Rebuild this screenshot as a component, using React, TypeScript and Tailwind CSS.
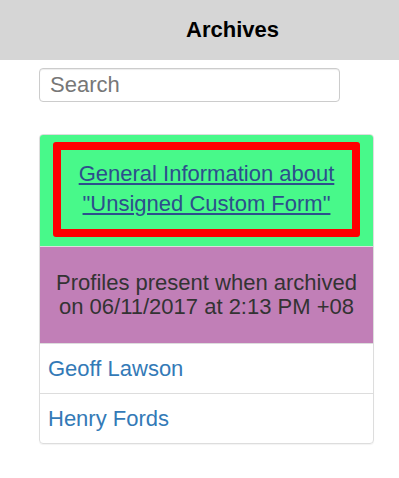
export default function App() {
  const profiles = ["Geoff Lawson", "Henry Fords"];

  return (
    <div className="min-h-screen bg-white font-['Liberation_Sans',Arial,sans-serif] text-[22px]">
      <header className="flex h-[60px] items-center justify-center bg-[#d6d6d6] pl-[66px]">
        <h1 className="text-[22px] font-bold leading-none text-black">Archives</h1>
      </header>

      <div className="pl-[39px] pt-[8px]">
        <input
          type="text"
          placeholder="Search"
          className="h-[34px] w-[301px] rounded-[4px] border border-[#ccc] px-[10px] text-[22px] text-[#555] shadow-[inset_0_1px_1px_rgba(0,0,0,0.075)] outline-none placeholder:text-[#777]"
        />

        <div className="mt-[32px] w-[335px] overflow-hidden rounded-[4px] border border-[#ddd] shadow-[0_1px_1px_rgba(0,0,0,0.05)]">
          <div className="border-b border-[#ddd] bg-[#48f98a] px-[13px] pb-[9px] pt-[7px]">
            <div className="rounded-[3px] border-[8px] border-[#ff0000] px-2 pb-[10px] pt-[9px] text-center leading-[30px]">
              <a href="#" className="text-[#2d4f8c] underline">
                General Information about
                <br />
                "Unsigned Custom Form"
              </a>
            </div>
          </div>

          <div className="bg-[#c17fb7] px-3 py-[24px] text-center leading-[24px] text-[#333]">
            Profiles present when archived
            <br />
            on 06/11/2017 at 2:13 PM +08
          </div>

          {profiles.map((name) => (
            <div
              key={name}
              className="border-t border-[#ddd] px-[8px] py-[10px] leading-[29px]"
            >
              <a href="#" className="text-[#337ab7]">
                {name}
              </a>
            </div>
          ))}
        </div>
      </div>
    </div>
  );
}
